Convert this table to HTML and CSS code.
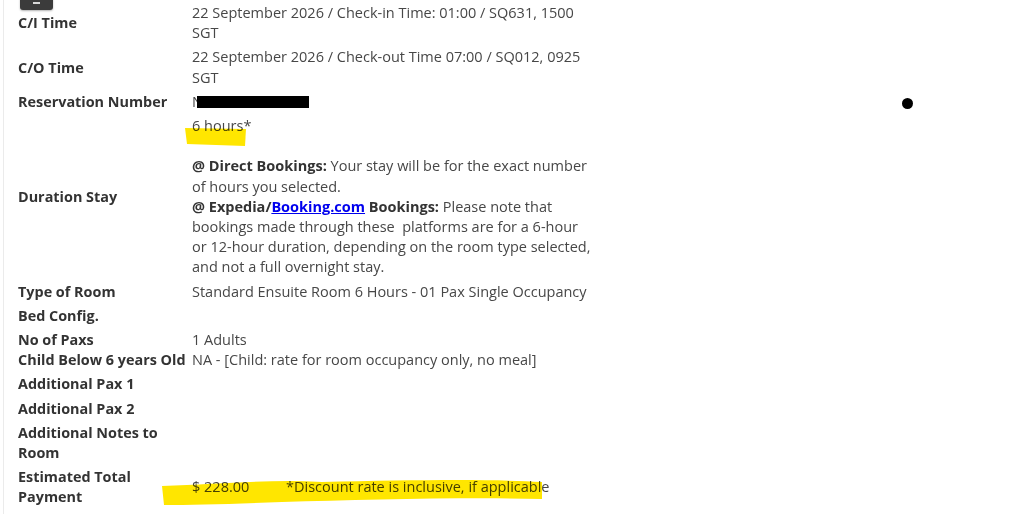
FILE: index.html
```html
<!DOCTYPE html>
<html lang="en">
<head>
    <meta charset="UTF-8">
    <meta name="viewport" content="width=device-width, initial-scale=1.0">
    <title>Booking Details</title>
    <link rel="stylesheet" href="styles.css">
</head>
<body>
    <div class="page">
        <span class="tab-badge"><span class="tab-glyph"></span></span>

        <table class="details">
            <colgroup>
                <col class="col-label">
                <col class="col-value">
            </colgroup>
            <tr>
                <th>C/I Time</th>
                <td>22 September 2026 / Check-in Time: 01:00 / SQ631, 1500 SGT</td>
            </tr>
            <tr>
                <th>C/O Time</th>
                <td>22 September 2026 / Check-out Time 07:00 / SQ012, 0925 SGT</td>
            </tr>
            <tr>
                <th>Reservation Number</th>
                <td><span class="redacted-wrap">N<span class="redacted"></span></span></td>
            </tr>
            <tr>
                <th>Duration Stay</th>
                <td>
                    <span class="hl-wrap">6 hours*
                        <svg class="highlight hl-hours" width="64" height="22" viewBox="0 0 64 22"><path d="M1 3 L62 4 L61 21 L3 19 Z" fill="#ffe600"/></svg>
                    </span><br><br>
                    <b>@ Direct Bookings:</b> Your stay will be for the exact number of hours you selected.<br>
                    <b>@ Expedia/<a href="#">Booking.com</a> Bookings:</b> Please note that bookings made through these&nbsp; platforms are for a 6-hour or 12-hour duration, depending on the room type selected, and not a full overnight stay.
                </td>
            </tr>
            <tr>
                <th>Type of Room</th>
                <td>Standard Ensuite Room 6 Hours - 01 Pax Single Occupancy</td>
            </tr>
            <tr>
                <th>Bed Config.</th>
                <td></td>
            </tr>
            <tr>
                <th class="nowrap">No of Paxs<br>Child Below 6 years Old</th>
                <td class="nowrap">1 Adults<br>NA - [Child: rate for room occupancy only, no meal]</td>
            </tr>
            <tr>
                <th>Additional Pax 1</th>
                <td></td>
            </tr>
            <tr>
                <th>Additional Pax 2</th>
                <td></td>
            </tr>
            <tr>
                <th>Additional Notes to Room</th>
                <td></td>
            </tr>
            <tr>
                <th>Estimated Total Payment</th>
                <td class="payment">
                    <svg class="highlight hl-payment" width="384" height="28" viewBox="0 0 384 28"><path d="M0 8 C60 6 110 1 160 4 C250 2 330 1 380 4 L380 21 C300 19 200 22 120 24 C70 26 30 27 2 27 Z" fill="#ffe600"/></svg>
                    <span class="amount">$ 228.00</span><span class="discount">*Discount rate is inclusive, if applicable</span>
                </td>
            </tr>
            <tr>
                <th></th>
                <td class="cut-off">¦</td>
            </tr>
        </table>

        <span class="dot"></span>
    </div>
</body>
</html>
```

FILE: styles.css
```css
body {
    margin: 0;
    background: #ffffff;
    font-family: 'Open Sans', Arial, sans-serif;
    font-size: 14.5px;
    color: #444444;
    overflow: hidden;
}
.page {
    position: relative;
    margin-left: 3px;
    padding: 1px 0 0 14px;
    min-height: 520px;
    border-left: 1px solid #ebebeb;
}
.tab-badge {
    position: absolute;
    top: -4px;
    left: 16px;
    width: 33px;
    height: 14px;
    background: #3b3b3b;
    border-radius: 3px;
    box-shadow: 0 1px 2px rgba(0,0,0,0.3);
}
.tab-glyph {
    position: absolute;
    top: 6px;
    left: 13px;
    width: 7px;
    height: 2px;
    background: #d8d8d8;
}
.details {
    border-collapse: collapse;
    table-layout: fixed;
    width: 574px;
}
.col-label { width: 174px; }
.col-value { width: 400px; }
.details th,
.details td {
    padding: 2px 0;
    line-height: 20.2px;
    vertical-align: middle;
    text-align: left;
}
.details th {
    padding-right: 24px;
    font-size: 14.4px;
    font-weight: 700;
    color: #333333;
}
.details td {
    color: #474747;
}
.details td b {
    color: #333333;
}
.details a {
    color: #0000ee;
    text-decoration: underline;
}
.nowrap {
    white-space: nowrap;
}
.redacted-wrap {
    position: relative;
}
.redacted {
    display: inline-block;
    width: 112px;
    height: 12px;
    margin-left: -6px;
    vertical-align: -1px;
    background: #000000;
}
.hl-wrap {
    position: relative;
}
.highlight {
    position: absolute;
    mix-blend-mode: multiply;
    pointer-events: none;
}
.hl-hours {
    left: -8px;
    top: 9px;
}
.payment {
    position: relative;
}
.hl-payment {
    left: -30px;
    top: 13px;
}
.amount {
    display: inline-block;
    width: 94px;
}
.cut-off {
    height: 6px;
    font-size: 10px;
    color: #777777;
}
.dot {
    position: absolute;
    top: 98px;
    left: 898px;
    width: 11px;
    height: 11px;
    border-radius: 50%;
    background: #000000;
}
```
